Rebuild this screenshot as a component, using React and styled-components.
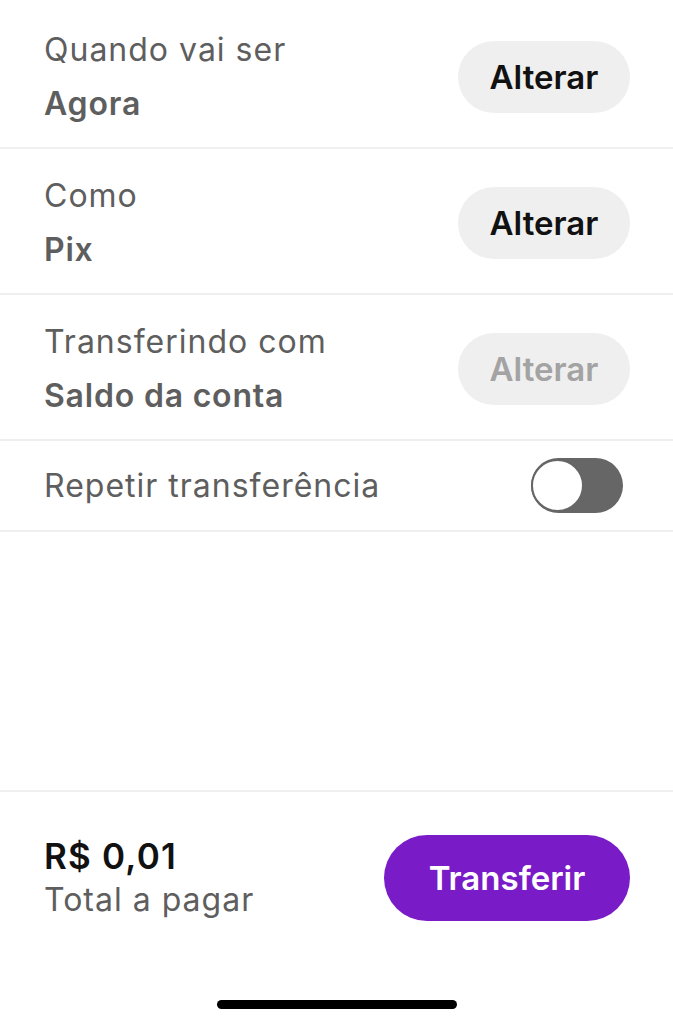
import styled, { createGlobalStyle } from "styled-components";

const GlobalStyle = createGlobalStyle`
  body {
    margin: 0;
    background: #fff;
    font-family: Inter, Roboto, "Liberation Sans", sans-serif;
  }
`;

const Page = styled.div`
  display: flex;
  flex-direction: column;
  height: 1024px;
  padding-top: 3px;
  box-sizing: border-box;
  background: #fff;
`;

const Row = styled.div`
  display: flex;
  align-items: center;
  justify-content: space-between;
  padding: ${(p) => (p.$height ? 0 : 4)}px 43px 0 44px;
  box-sizing: border-box;
  height: ${(p) => p.$height || 146}px;
  border-bottom: 2px solid #efefef;
`;

const Info = styled.div`
  display: flex;
  flex-direction: column;
`;

const Label = styled.span`
  font-size: 32px;
  line-height: 54px;
  letter-spacing: 1px;
  color: #5e5e5e;
  font-weight: 400;
`;

const Value = styled(Label)`
  font-weight: 600;
  letter-spacing: 0.8px;
`;

const ChangeButton = styled.button`
  width: 172px;
  height: 72px;
  border: none;
  border-radius: 36px;
  background: #efefef;
  font-family: inherit;
  font-size: 33px;
  font-weight: 600;
  color: ${(p) => (p.disabled ? "#a3a3a3" : "#111")};
`;

const Toggle = styled.div`
  width: 92px;
  height: 55px;
  margin-right: 7px;
  border-radius: 28px;
  background: #666;
  position: relative;
  &::after {
    content: "";
    position: absolute;
    top: 1px;
    left: 0;
    width: 53px;
    height: 53px;
    border-radius: 50%;
    border: 2px solid #666;
    background: #fff;
    box-sizing: border-box;
  }
`;

const Spacer = styled.div`
  flex: 1;
`;

const Footer = styled.div`
  border-top: 2px solid #efefef;
  height: 232px;
  display: flex;
  flex-direction: column;
`;

const Bar = styled.div`
  display: flex;
  align-items: center;
  justify-content: space-between;
  padding: 42px 43px 0 44px;
`;

const Price = styled.div`
  font-size: 35px;
  line-height: 44px;
  letter-spacing: 1.2px;
  font-weight: 600;
  color: #111;
`;

const Total = styled.div`
  font-size: 32px;
  line-height: 44px;
  letter-spacing: 1px;
  color: #5e5e5e;
`;

const PrimaryButton = styled.button`
  width: 246px;
  height: 86px;
  border: none;
  border-radius: 43px;
  background: #7a1bc8;
  color: #fff;
  font-family: inherit;
  font-size: 33px;
  font-weight: 600;
`;

const HomeIndicator = styled.div`
  width: 240px;
  height: 9px;
  border-radius: 5px;
  background: #000;
  margin: auto auto 15px;
`;

const rows = [
  { label: "Quando vai ser", value: "Agora" },
  { label: "Como", value: "Pix" },
  { label: "Transferindo com", value: "Saldo da conta", disabled: true },
];

export default function App() {
  return (
    <Page>
      <GlobalStyle />
      {rows.map((r) => (
        <Row key={r.label}>
          <Info>
            <Label>{r.label}</Label>
            <Value>{r.value}</Value>
          </Info>
          <ChangeButton disabled={r.disabled}>Alterar</ChangeButton>
        </Row>
      ))}
      <Row $height={91}>
        <Label>Repetir transferência</Label>
        <Toggle />
      </Row>
      <Spacer />
      <Footer>
        <Bar>
          <Info>
            <Price>R$ 0,01</Price>
            <Total>Total a pagar</Total>
          </Info>
          <PrimaryButton>Transferir</PrimaryButton>
        </Bar>
        <HomeIndicator />
      </Footer>
    </Page>
  );
}
